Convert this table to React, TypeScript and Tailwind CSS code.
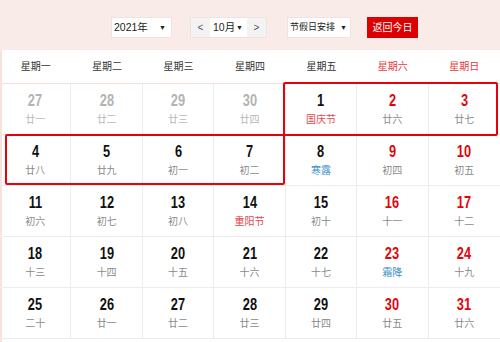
import React from "react";

type Cell = { d: number; l: string; prev?: boolean; red?: boolean; kind?: "fest" | "term" };

const rows: Cell[][] = [
  [
    { d: 27, l: "廿一", prev: true },
    { d: 28, l: "廿二", prev: true },
    { d: 29, l: "廿三", prev: true },
    { d: 30, l: "廿四", prev: true },
    { d: 1, l: "国庆节", kind: "fest" },
    { d: 2, l: "廿六", red: true },
    { d: 3, l: "廿七", red: true },
  ],
  [
    { d: 4, l: "廿八" },
    { d: 5, l: "廿九" },
    { d: 6, l: "初一" },
    { d: 7, l: "初二" },
    { d: 8, l: "寒露", kind: "term" },
    { d: 9, l: "初四", red: true },
    { d: 10, l: "初五", red: true },
  ],
  [
    { d: 11, l: "初六" },
    { d: 12, l: "初七" },
    { d: 13, l: "初八" },
    { d: 14, l: "重阳节", kind: "fest" },
    { d: 15, l: "初十" },
    { d: 16, l: "十一", red: true },
    { d: 17, l: "十二", red: true },
  ],
  [
    { d: 18, l: "十三" },
    { d: 19, l: "十四" },
    { d: 20, l: "十五" },
    { d: 21, l: "十六" },
    { d: 22, l: "十七" },
    { d: 23, l: "霜降", red: true, kind: "term" },
    { d: 24, l: "十九", red: true },
  ],
  [
    { d: 25, l: "二十" },
    { d: 26, l: "廿一" },
    { d: 27, l: "廿二" },
    { d: 28, l: "廿三" },
    { d: 29, l: "廿四" },
    { d: 30, l: "廿五", red: true },
    { d: 31, l: "廿六", red: true },
  ],
];

const weekdays = ["星期一", "星期二", "星期三", "星期四", "星期五", "星期六", "星期日"];

const cjk = { fontFamily: '"Liberation Sans", "Noto Sans CJK SC", sans-serif' };
const num = { fontFamily: '"Liberation Sans", Arial, sans-serif' };

export default function App() {
  return (
    <div className="relative w-[500px] h-[342px] overflow-hidden bg-[#f9ece8]" style={cjk}>
      {/* toolbar */}
      <div className="h-[50px] flex items-start pt-[17px] pl-[111px] text-[10.5px] text-[#222] whitespace-nowrap">
        <div className="w-[61px] h-[21px] bg-white border border-[#f1e4e0] flex items-center justify-between pl-[2px] pr-[5px]">
          <span className="leading-none">2021年</span>
          <span className="text-[7px] leading-none">▼</span>
        </div>
        <div className="ml-[18px] h-[21px] flex border border-[#ede3e0]">
          <div className="w-[19px] bg-[#f3f3f3] flex items-center justify-center text-[10px] text-[#555]">&lt;</div>
          <div className="w-[37px] bg-white flex items-center justify-between pl-[3px] pr-[4px]">
            <span className="leading-none">10月</span>
            <span className="text-[7px] leading-none">▼</span>
          </div>
          <div className="w-[19px] bg-[#f3f3f3] flex items-center justify-center text-[10px] text-[#555]">&gt;</div>
        </div>
        <div className="ml-[20px] w-[64px] h-[21px] bg-white border border-[#f1e4e0] flex items-center justify-between pl-[2px] pr-[3px]">
          <span className="leading-none text-[9px]">节假日安排</span>
          <span className="text-[7px] leading-none">▼</span>
        </div>
        <div className="ml-[16px] w-[51px] h-[21px] bg-[#dc0000] text-white flex items-center justify-center leading-none text-[10px]">
          返回今日
        </div>
      </div>

      {/* calendar */}
      <div className="bg-white shadow-[inset_2px_0_0_#f7e2dc] h-[292px]">
        <div className="grid grid-cols-7 h-[34px] border-b border-[#f7e0da]">
          {weekdays.map((w, i) => (
            <div
              key={w}
              className={`flex items-center justify-center text-[10px] ${i >= 5 ? "text-[#e8393c]" : "text-[#333]"}`}
            >
              {w}
            </div>
          ))}
        </div>
        {rows.map((r, ri) => (
          <div key={ri} className="grid grid-cols-7 h-[51px]">
            {r.map((c, ci) => {
              const numColor = c.prev ? "text-[#b3b3b3]" : c.red ? "text-[#e0060c]" : "text-[#111]";
              const lColor =
                c.kind === "fest"
                  ? "text-[#e2474d]"
                  : c.kind === "term"
                  ? "text-[#3c8fc6]"
                  : c.prev
                  ? "text-[#b8b8b8]"
                  : "text-[#8a8a8a]";
              return (
                <div
                  key={ci}
                  className={`flex flex-col items-center pt-[8px] border-b border-[#ececec] ${ci < 6 ? "border-r" : ""}`}
                >
                  <span className={`inline-block scale-x-[0.8] text-[16px] leading-[18px] font-bold ${numColor}`} style={num}>
                    {c.d}
                  </span>
                  <span className={`mt-[3px] text-[10px] leading-[13px] ${lColor}`}>{c.l}</span>
                </div>
              );
            })}
          </div>
        ))}
      </div>

      {/* highlight boxes */}
      <div className="absolute left-[283px] top-[82px] w-[215px] h-[54px] border-2 border-[#e8000b] rounded-[2px]" />
      <div className="absolute left-[5px] top-[134px] w-[280px] h-[51px] border-2 border-[#e8000b] rounded-[2px]" />
    </div>
  );
}
